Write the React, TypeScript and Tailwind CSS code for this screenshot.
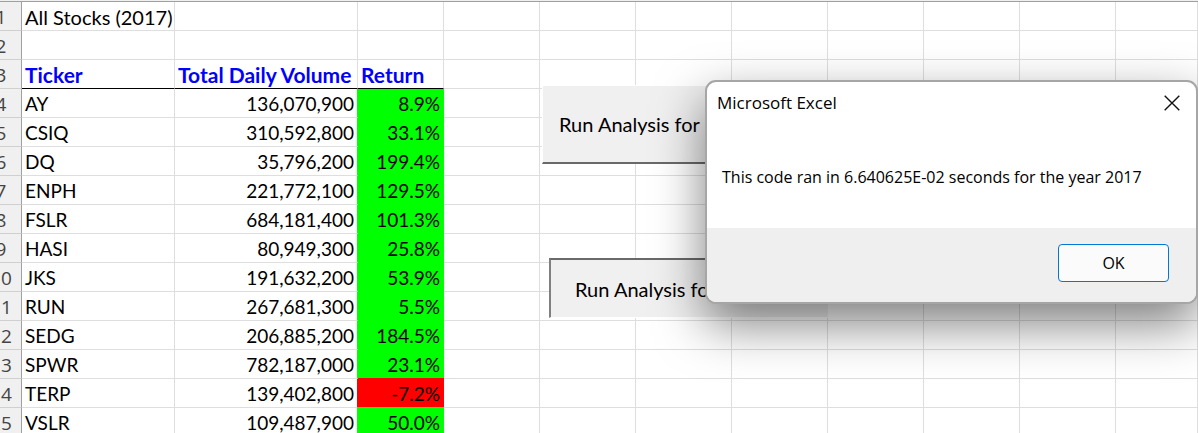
const rows: [string, string, string][] = [
  ["AY", "136,070,900", "8.9%"],
  ["CSIQ", "310,592,800", "33.1%"],
  ["DQ", "35,796,200", "199.4%"],
  ["ENPH", "221,772,100", "129.5%"],
  ["FSLR", "684,181,400", "101.3%"],
  ["HASI", "80,949,300", "25.8%"],
  ["JKS", "191,632,200", "53.9%"],
  ["RUN", "267,681,300", "5.5%"],
  ["SEDG", "206,885,200", "184.5%"],
  ["SPWR", "782,187,000", "23.1%"],
  ["TERP", "139,402,800", "-7.2%"],
  ["VSLR", "109,487,900", "50.0%"],
];

const emptyColumns = [0, 1, 2, 3, 4, 5, 6, 7];
const isLoss = (change?: string) => change !== undefined && change.startsWith("-");
const cell = "h-[29px] border-r border-b border-[#dedede] p-0 pt-0.5 whitespace-nowrap";
const heading =
  "h-[29px] border-r border-b border-r-[#dedede] border-b-black p-0 pt-0.5 pl-[3px] text-left text-[21px] leading-[26px] font-bold text-[#0000ff] whitespace-nowrap";

function RowNumber({ n }: { n: number }) {
  return (
    <th
      scope="row"
      className="h-[29px] border-r border-b border-r-[#a0a0a0] border-b-[#d0d0d0] bg-[#f0f0f0] p-0 pt-0.5 pl-px text-center font-['Open_Sans',sans-serif] text-[19px] leading-[26px] font-normal text-[#444]"
    >
      {n}
    </th>
  );
}

function EmptyCells() {
  return (
    <>
      {emptyColumns.map((c) => (
        <td key={c} className={cell} />
      ))}
    </>
  );
}

function Sheet() {
  return (
    <table className="-ml-5 w-[calc(100%+20px)] table-fixed border-separate border-spacing-0 border-t border-[#a0a0a0] text-[19px] leading-[26px] text-black">
      <colgroup>
        <col className="w-[42px]" />
        <col className="w-[153px]" />
        <col className="w-[183px]" />
        <col className="w-[86px]" />
        <col className="w-[96px]" />
        <col className="w-[96px]" />
        <col className="w-[96px]" />
        <col className="w-[96px]" />
        <col className="w-[96px]" />
        <col className="w-[96px]" />
        <col className="w-[96px]" />
        <col />
      </colgroup>
      <tbody>
        <tr>
          <RowNumber n={1} />
          <td className={`${cell} pl-[3px] text-[20px] leading-[26px]`}>All Stocks (2017)</td>
          <td className={cell} />
          <td className={cell} />
          <EmptyCells />
        </tr>
        <tr>
          <RowNumber n={2} />
          <td className={cell} />
          <td className={cell} />
          <td className={cell} />
          <EmptyCells />
        </tr>
        <tr>
          <RowNumber n={3} />
          <th scope="col" className={heading}>Ticker</th>
          <th scope="col" className={heading}>Total Daily Volume</th>
          <th scope="col" className={heading}>Return</th>
          <EmptyCells />
        </tr>
        {rows.map(([ticker, volume, change], i) => {
          const loss = isLoss(change);
          const nextLoss = isLoss(rows[i + 1]?.[2]);
          return (
            <tr key={ticker}>
              <RowNumber n={i + 4} />
              <td className={`${cell} pl-[3px]`}>{ticker}</td>
              <td
                className={`h-[29px] border-r border-b border-b-[#dedede] p-0 pt-0.5 pr-[3px] text-right ${
                  loss ? "border-r-[#ff0000]" : "border-r-[#00ff00]"
                }`}
              >
                {volume}
              </td>
              <td
                className={`h-[29px] border-b p-0 pt-0.5 pr-1 text-right ${
                  loss ? "bg-[#ff0000]" : "bg-[#00ff00]"
                } ${nextLoss ? "border-b-[#ff0000]" : "border-b-[#00ff00]"}`}
              >
                {change}
              </td>
              <EmptyCells />
            </tr>
          );
        })}
      </tbody>
    </table>
  );
}

function MessageBox() {
  return (
    <div
      role="dialog"
      aria-labelledby="box-title"
      className="absolute top-20 left-[705px] flex w-[493px] flex-col overflow-hidden rounded-[11px] border-2 border-[#a6a6a6] bg-white font-['Open_Sans',sans-serif] text-[16px] text-black shadow-[0_20px_50px_rgba(0,0,0,0.5)]"
    >
      <div className="flex h-[42px] items-center justify-between pr-4 pl-[10px]">
        <h1 id="box-title" className="text-[17px]">Microsoft Excel</h1>
        <button type="button" aria-label="Close">
          <svg className="size-4" viewBox="0 0 16 16" fill="none" stroke="#111" strokeWidth="1.4">
            <path d="M0.7 0.7 15.3 15.3M15.3 0.7 0.7 15.3" />
          </svg>
        </button>
      </div>
      <p className="h-[104px] pt-[41px] pl-[15px] leading-6 whitespace-nowrap">
        This code ran in 6.640625E-02 seconds for the year 2017
      </p>
      <div className="flex justify-end bg-[#efefef] pt-4 pr-[27px] pb-5">
        <button
          type="button"
          className="h-[38px] w-[111px] rounded border border-[#0078d4] bg-[#fbfbfb]"
        >
          OK
        </button>
      </div>
    </div>
  );
}

export default function App() {
  return (
    <main className="relative h-screen overflow-hidden bg-white font-[Lato,sans-serif]">
      <div className="h-px bg-[#f0f0f0]" />
      <Sheet />
      <button
        type="button"
        className="absolute top-[85px] left-[542px] h-[79px] w-[280px] border-t border-b-2 border-l border-t-white border-b-[#696969] border-l-white bg-[#f0f0f0] pl-4 text-left text-[20px] text-black"
      >
        Run Analysis for
      </button>
      <button
        type="button"
        className="absolute top-[258px] left-[549px] h-[60px] w-[279px] border-t-2 border-b border-l-2 border-t-[#696969] border-b-white border-l-[#808080] bg-[#f0f0f0] pl-6 text-left text-[20px] text-black"
      >
        Run Analysis for
      </button>
      <MessageBox />
    </main>
  );
}
